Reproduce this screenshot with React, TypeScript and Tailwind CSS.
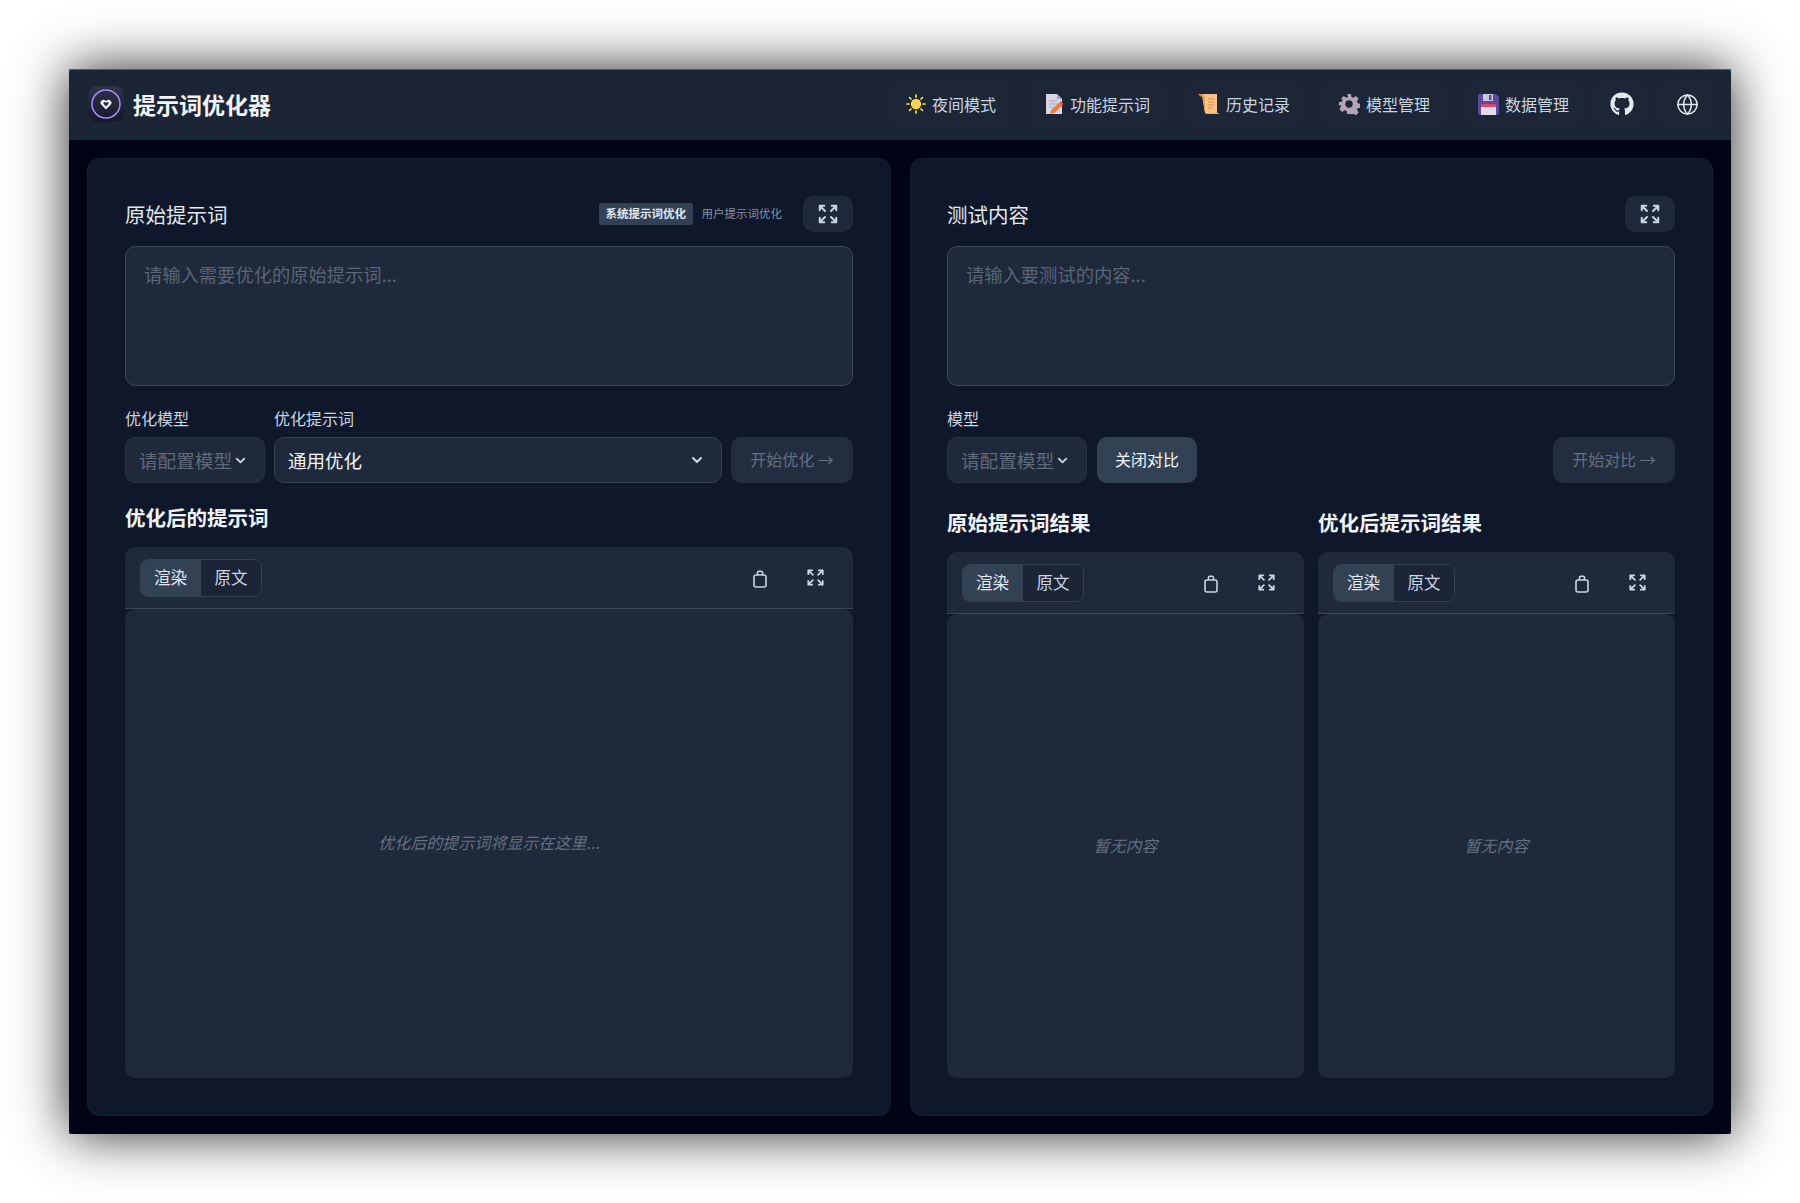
import { ChevronDown, Globe } from 'lucide-react'
import { FaGithub } from 'react-icons/fa'

const ExpandIcon = ({ className }: { className: string }) => (
  <svg className={className} viewBox="0 0 24 24" fill="none" stroke="currentColor" strokeWidth={2} strokeLinecap="round" strokeLinejoin="round">
    <path d="M3.75 3.75v4.5m0-4.5h4.5m-4.5 0L9 9M3.75 20.25v-4.5m0 4.5h4.5m-4.5 0L9 15M20.25 3.75h-4.5m4.5 0v4.5m0-4.5L15 9m5.25 11.25h-4.5m4.5 0v-4.5m0 4.5L15 15" />
  </svg>
)

const ClipboardIcon = () => (
  <svg className="w-[14px] h-[18px]" viewBox="0 0 14 18" fill="none" stroke="currentColor" strokeWidth={1.6} strokeLinejoin="round">
    <path d="M3 5h8a2 2 0 0 1 2 2v8a2 2 0 0 1-2 2H3a2 2 0 0 1-2-2V7a2 2 0 0 1 2-2z" />
    <path d="M4.500 5V2.600A1.400 1.400 0 0 1 5.900 1.200h2.200a1.400 1.400 0 0 1 1.400 1.400V5" />
  </svg>
)

const SunIcon = () => (
  <svg className="w-5 h-5" viewBox="0 0 20 20">
    <circle cx="10" cy="10" r="5.200" fill="#fcd34d" />
    <g stroke="#fde047" strokeWidth="1.700" strokeLinecap="round">
      <path d="M10 1v2M10 17v2M1 10h2M17 10h2M3.600 3.600 5 5M15 15l1.400 1.400M3.600 16.400 5 15M15 5l1.400-1.400" />
    </g>
  </svg>
)

const DocIcon = () => (
  <svg className="w-5 h-[22px]" viewBox="0 0 20 22">
    <path d="M2 1h11l5 5v15H2z" fill="#d9d6e8" />
    <path d="M13 1l5 5h-5z" fill="#a9a5c0" />
    <path d="M5 8h8M5 11h9M5 14h5" stroke="#b3a6b4" strokeWidth="1.100" />
    <path d="M6 21l1.500-4.500 8-7 3 3-7.500 7z" fill="#f07b3f" />
    <path d="M15.500 9.500l1.500-1.300 2.600 2.800-1.600 1.500z" fill="#e5484d" />
  </svg>
)

const ScrollIcon = () => (
  <svg className="w-[22px] h-[22px]" viewBox="0 0 22 22">
    <path d="M0 1h5l1 2.500H2z" fill="#c88a4a" />
    <path d="M4 1h15v19H7z" fill="#f9c183" />
    <path d="M4 1c2 0 3 1 3 3v15c0 1.500 1 2 2 2h12v-1H7" fill="#eba865" />
    <path d="M10 6h6M10 9h6M10 12h6M10 15h4" stroke="#d98c4a" strokeWidth="1.100" />
  </svg>
)

const GearIcon = () => (
  <svg className="w-[22px] h-[22px]" viewBox="0 0 24 24">
    <path
      fill="#b3a5b8"
      fillRule="evenodd"
      d="M10 1h4l.7 3.300 2 .8L19.600 3.300l2.900 2.900-1.800 2.900.8 2 3.300.7v4l-3.300.7-.8 2 1.800 2.900-2.900 2.900-2.900-1.800-2 .8L14 23h-4l-.7-3.300-2-.8-2.900 1.800-2.900-2.900 1.800-2.900-.8-2L1 14v-4l3.300-.7.8-2L3.300 6.200l2.900-2.900 2.900 1.800 2-.8zM12 8a4 4 0 1 0 0 8 4 4 0 0 0 0-8z"
    />
  </svg>
)

const SaveIcon = () => (
  <svg className="w-[21px] h-[21px]" viewBox="0 0 21 21">
    <path d="M2 0h16l3 3v16a2 2 0 0 1-2 2H2a2 2 0 0 1-2-2V2a2 2 0 0 1 2-2z" fill="#5b4a9c" />
    <rect x="5" y="0" width="10" height="7" fill="#c9c5dc" />
    <rect x="11" y="1" width="2.500" height="5" fill="#5b4a9c" />
    <rect x="3" y="10" width="15" height="3" fill="#e0436b" />
    <rect x="3" y="13" width="15" height="8" fill="#e4dbe8" />
  </svg>
)

const navItems = [
  { label: '夜间模式', icon: <SunIcon /> },
  { label: '功能提示词', icon: <DocIcon /> },
  { label: '历史记录', icon: <ScrollIcon /> },
  { label: '模型管理', icon: <GearIcon /> },
  { label: '数据管理', icon: <SaveIcon /> },
]

function ModelSelect() {
  return (
    <div className="w-[140px] h-[46px] shrink-0 flex items-center gap-[1px] pl-[13px] rounded-[10px] border border-[#273246] bg-[#1e293b] text-[18.600px] text-[#5f6b7c]">
      请配置模型
      <ChevronDown className="w-[15px] h-[15px] text-[#cbd5e1]" strokeWidth={3} />
    </div>
  )
}

function ActionButton({ label }: { label: string }) {
  return (
    <button className="w-[122px] h-[46px] shrink-0 pb-[2px] rounded-[10px] bg-[#222d3f] text-[16px] text-[#646f80]">
      {label} →
    </button>
  )
}

function PromptInput({ placeholder }: { placeholder: string }) {
  return (
    <textarea
      readOnly
      placeholder={placeholder}
      className="block w-full h-[140px] resize-none rounded-[10px] border border-[#3a465a] bg-[#1e293b] px-[18px] py-[14px] text-[18.300px] leading-[26px] outline-none placeholder:text-[#596578]"
    />
  )
}

function ExpandButton() {
  return (
    <button className="w-[50px] h-[36px] flex items-center justify-center rounded-[10px] bg-[#1e293b] text-[#cbd5e1]">
      <ExpandIcon className="w-6 h-6" />
    </button>
  )
}

function OutputBox({ empty }: { empty: string }) {
  return (
    <div className="flex-1 min-w-0 flex flex-col">
      <div className="h-[62px] shrink-0 flex items-center justify-between pl-[15px] pr-[18px] rounded-t-[10px] bg-[#1e293b] border-b border-[#3c475a]">
        <div className="flex h-[38px] rounded-[8px] border border-[#334155] overflow-hidden text-[16.500px]">
          <span className="w-[59px] flex items-center justify-center bg-[#334155] text-[#e2e8f0]">渲染</span>
          <span className="w-[61px] flex items-center justify-center border-l border-[#334155] bg-[#1b2537] text-[#cbd5e1]">原文</span>
        </div>
        <div className="flex items-center gap-[15px] text-[#cbd5e1]">
          <button className="w-10 h-9 flex items-center justify-center pt-[2px]"><ClipboardIcon /></button>
          <button className="w-10 h-9 flex items-center justify-center"><ExpandIcon className="w-[21px] h-[21px]" /></button>
        </div>
      </div>
      <div className="flex-1 flex items-center justify-center pb-[3px] rounded-[10px] bg-[#1e293b] italic text-[16px] text-[#646f80]">{empty}</div>
    </div>
  )
}

export default function App() {
  return (
    <div className="min-h-[1203px] bg-white px-[69px] pt-[69px] font-['Noto_Sans_CJK_SC','Liberation_Sans',sans-serif]">
      <div className="h-[1065px] bg-[#2b6a96] pt-px shadow-[0_0_50px_rgba(0,0,0,0.85)]">
        <div className="h-full flex flex-col rounded-[4px] overflow-hidden bg-[#000414]">
          <header className="h-[70px] shrink-0 flex items-center justify-between pl-[19px] pr-[15px] pb-[2px] bg-[#1b2535]">
            <div className="flex items-center gap-[9px]">
              <div className="w-9 h-9 flex items-center justify-center rounded-[9px] bg-gradient-to-b from-[#2e3449] to-[#141829]">
                <svg className="w-[30px] h-[30px]" viewBox="0 0 30 30" fill="none">
                  <circle cx="15" cy="15" r="14" stroke="#a78bfa" strokeWidth="1.500" />
                  <path d="M15 20.500l-4.600-4.700a2.900 2.900 0 0 1 4.100-4.100l.5.500.5-.5a2.900 2.900 0 0 1 4.100 4.100z" fill="#f5f3ff" />
                  <path d="M15 17.500l-2.400-2.500a1.300 1.300 0 0 1 1.800-1.800l.6.600.6-.6a1.300 1.300 0 0 1 1.800 1.800z" fill="#2a2f45" />
                </svg>
              </div>
              <h1 className="text-[23px] font-bold text-[#f1f5f9]">提示词优化器</h1>
            </div>
            <nav className="flex items-center gap-[10px] text-[16px] text-[#cbd5e1]">
              <div className="flex items-center gap-4">
                {navItems.map((item) => (
                  <button key={item.label} className="h-[44px] flex items-center gap-[6px] px-4 rounded-[8px] bg-[#1c2637]">
                    {item.icon}
                    {item.label}
                  </button>
                ))}
              </div>
              <button className="h-[44px] flex items-center px-[15px] rounded-[8px] bg-[#1c2637] text-[#e2e8f0]">
                <FaGithub className="w-6 h-6" />
              </button>
              <button className="h-[44px] flex items-center px-[17px] rounded-[8px] bg-[#1c2637] text-[#e2e8f0]">
                <Globe className="w-[23px] h-[23px]" strokeWidth={1.600} />
              </button>
            </nav>
          </header>

          <main className="flex-1 min-h-0 flex gap-[19px] p-[18px]">
            <section className="flex-1 min-w-0 flex flex-col rounded-[12px] border border-[#161f31] bg-[#0f172a] px-[37px] py-[37px]">
              <div className="h-9 flex items-center justify-between mb-[14px]">
                <h2 className="text-[20.500px] text-[#e2e8f0]">原始提示词</h2>
                <div className="flex items-center gap-[13px]">
                  <div className="flex items-center text-[11.500px]">
                    <span className="h-[22px] flex items-center px-[6.500px] rounded-[3px] bg-[#334155] font-bold text-[#e2e8f0]">系统提示词优化</span>
                    <span className="pl-[9px] pr-[8px] text-[#8692a4]">用户提示词优化</span>
                  </div>
                  <ExpandButton />
                </div>
              </div>
              <PromptInput placeholder="请输入需要优化的原始提示词..." />
              <div className="flex gap-[9px] mt-[21px] mb-[8px] text-[16px] leading-[22px] text-[#cbd5e1]">
                <span className="w-[140px]">优化模型</span>
                <span>优化提示词</span>
              </div>
              <div className="flex gap-[9px]">
                <ModelSelect />
                <div className="flex-1 h-[46px] flex items-center justify-between pl-[13px] pr-[16px] rounded-[10px] border border-[#334155] bg-[#1e293b] text-[18.500px] text-[#f1f5f9]">
                  <span className="pt-[1px]">通用优化</span>
                  <ChevronDown className="w-4 h-4 text-[#cbd5e1]" strokeWidth={3} />
                </div>
                <ActionButton label="开始优化" />
              </div>
              <h3 className="mt-[20px] mb-[16px] text-[20.500px] leading-[28px] font-bold text-[#f1f5f9]">优化后的提示词</h3>
              <div className="flex-1 min-h-0 flex">
                <OutputBox empty="优化后的提示词将显示在这里..." />
              </div>
            </section>

            <section className="flex-1 min-w-0 flex flex-col rounded-[12px] border border-[#161f31] bg-[#0f172a] pl-[36px] pr-[37px] py-[37px]">
              <div className="h-9 flex items-center justify-between mb-[14px]">
                <h2 className="text-[20.500px] text-[#e2e8f0]">测试内容</h2>
                <ExpandButton />
              </div>
              <PromptInput placeholder="请输入要测试的内容..." />
              <div className="mt-[21px] mb-[8px] text-[16px] leading-[22px] text-[#cbd5e1]">模型</div>
              <div className="flex gap-[10px]">
                <ModelSelect />
                <button className="w-[100px] h-[46px] pb-[2px] rounded-[10px] bg-[#334155] text-[16px] text-[#f1f5f9]">关闭对比</button>
                <div className="flex-1" />
                <ActionButton label="开始对比" />
              </div>
              <div className="flex-1 min-h-0 flex gap-[14px] mt-[25px]">
                <div className="flex-1 min-w-0 flex flex-col">
                  <h3 className="mb-[16px] text-[20.500px] leading-[28px] font-bold text-[#f1f5f9]">原始提示词结果</h3>
                  <OutputBox empty="暂无内容" />
                </div>
                <div className="flex-1 min-w-0 flex flex-col">
                  <h3 className="mb-[16px] text-[20.500px] leading-[28px] font-bold text-[#f1f5f9]">优化后提示词结果</h3>
                  <OutputBox empty="暂无内容" />
                </div>
              </div>
            </section>
          </main>
        </div>
      </div>
    </div>
  )
}
